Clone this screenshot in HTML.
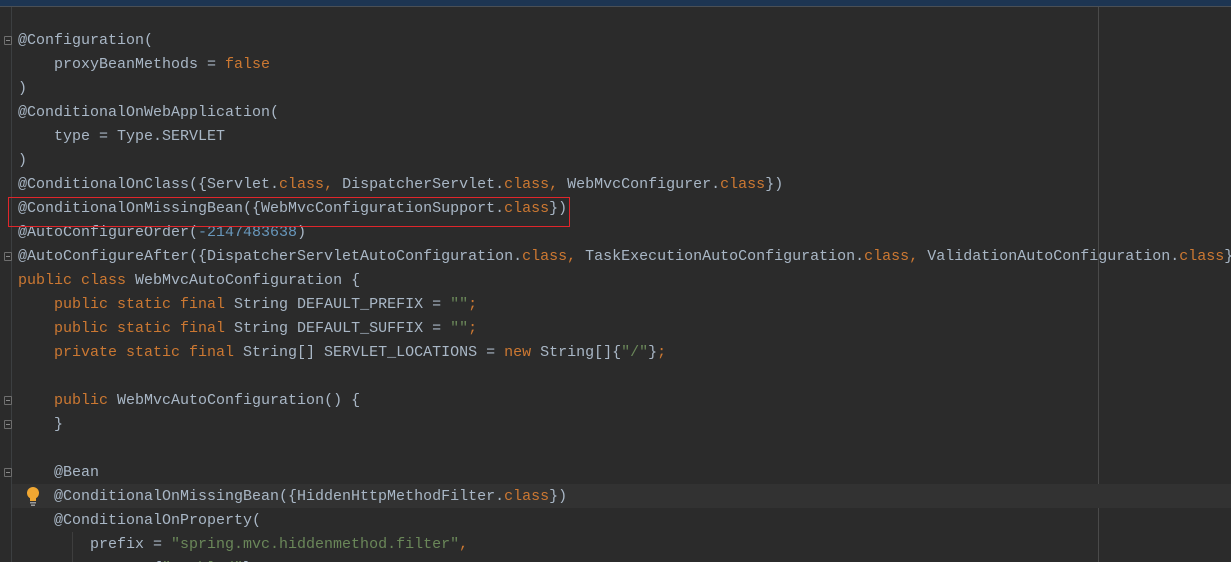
<!DOCTYPE html>
<html style="overflow:hidden;height:562px"><head><meta charset="utf-8"><style>
body{margin:0;width:1231px;height:562px;overflow:hidden;background:#2b2b2b;position:relative;font-family:"Liberation Mono",monospace;font-size:15px;color:#a9b7c6}
.top{position:absolute;left:0;top:0;width:1231px;height:6px;background:#1d3552;border-bottom:1px solid #4a4f55}
.gut{position:absolute;left:11px;top:7px;width:1px;height:555px;background:#3c3f41}
.rm{position:absolute;left:1098px;top:7px;width:1px;height:555px;background:#4a4a4a}
.hl{position:absolute;left:12px;top:484px;width:1219px;height:24px;background:#323232}
.l{position:absolute;left:18px;height:24px;line-height:24px;white-space:pre}
.k{color:#cc7832}.n{color:#6897bb}.s{color:#6a8759}
.box{position:absolute;left:8px;top:197px;width:562px;height:30px;border:1px solid #e0262b;box-sizing:border-box}
.f{position:absolute;left:4px;width:8px;height:9px;border:1px solid #6e6e6e;box-sizing:border-box;border-radius:1px}
.f:after{content:"";position:absolute;left:1px;top:3px;width:4px;height:1px;background:#8a8a8a}
.ig{position:absolute;left:72px;top:532px;width:1px;height:30px;background:#3e3e3e}
</style></head><body>
<div class="top"></div><div class="gut"></div><div class="rm"></div><div class="hl"></div>
<div class="ig"></div>
<div class="f" style="top:36px"></div>
<div class="f" style="top:252px"></div>
<div class="f" style="top:396px"></div>
<div class="f" style="top:420px"></div>
<div class="f" style="top:468px"></div>
<svg style="position:absolute;left:26px;top:486px" width="14" height="20" viewBox="0 0 14 20"><circle cx="7" cy="7" r="6" fill="#f0a732"/><rect x="4" y="11" width="6" height="4" fill="#f0a732"/><rect x="4" y="16" width="6" height="1.5" fill="#9a9a9a"/><rect x="5" y="18.5" width="4" height="1.5" fill="#9a9a9a"/></svg>
<div class="l" style="top:29px">@Configuration(</div>
<div class="l" style="top:53px">    proxyBeanMethods = <span class="k">false</span></div>
<div class="l" style="top:77px">)</div>
<div class="l" style="top:101px">@ConditionalOnWebApplication(</div>
<div class="l" style="top:125px">    type = Type.SERVLET</div>
<div class="l" style="top:149px">)</div>
<div class="l" style="top:173px">@ConditionalOnClass({Servlet.<span class="k">class</span><span class="k">, </span>DispatcherServlet.<span class="k">class</span><span class="k">, </span>WebMvcConfigurer.<span class="k">class</span>})</div>
<div class="l" style="top:197px">@ConditionalOnMissingBean({WebMvcConfigurationSupport.<span class="k">class</span>})</div>
<div class="l" style="top:221px">@AutoConfigureOrder(<span class="n">-2147483638</span>)</div>
<div class="l" style="top:245px">@AutoConfigureAfter({DispatcherServletAutoConfiguration.<span class="k">class</span><span class="k">, </span>TaskExecutionAutoConfiguration.<span class="k">class</span><span class="k">, </span>ValidationAutoConfiguration.<span class="k">class</span>})</div>
<div class="l" style="top:269px"><span class="k">public class </span>WebMvcAutoConfiguration {</div>
<div class="l" style="top:293px">    <span class="k">public static final </span>String DEFAULT_PREFIX = <span class="s">""</span><span class="k">;</span></div>
<div class="l" style="top:317px">    <span class="k">public static final </span>String DEFAULT_SUFFIX = <span class="s">""</span><span class="k">;</span></div>
<div class="l" style="top:341px">    <span class="k">private static final </span>String[] SERVLET_LOCATIONS = <span class="k">new </span>String[]{<span class="s">"/"</span>}<span class="k">;</span></div>
<div class="l" style="top:389px">    <span class="k">public </span>WebMvcAutoConfiguration() {</div>
<div class="l" style="top:413px">    }</div>
<div class="l" style="top:461px">    @Bean</div>
<div class="l" style="top:485px">    @ConditionalOnMissingBean({HiddenHttpMethodFilter.<span class="k">class</span>})</div>
<div class="l" style="top:509px">    @ConditionalOnProperty(</div>
<div class="l" style="top:533px">        prefix = <span class="s">"spring.mvc.hiddenmethod.filter"</span><span class="k">,</span></div>
<div class="l" style="top:557px">        name = {<span class="s">"enabled"</span>}<span class="k">,</span></div>
<div class="box"></div>
</body></html>
